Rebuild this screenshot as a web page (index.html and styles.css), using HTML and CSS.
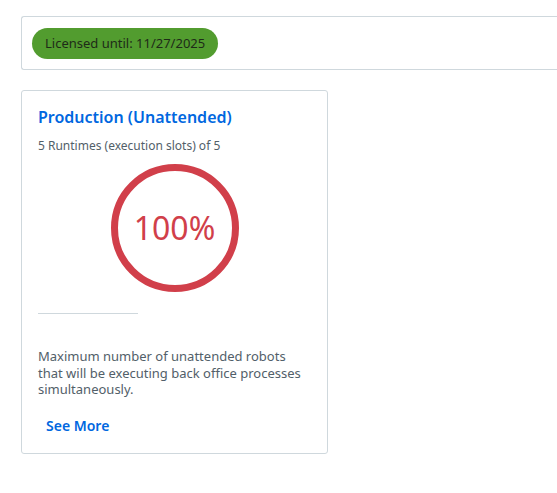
FILE: index.html
```html
<!DOCTYPE html>
<html lang="en">
  <head>
    <meta charset="UTF-8" />
    <meta name="viewport" content="width=device-width, initial-scale=1.0" />
    <title>Licenses</title>
    <link rel="stylesheet" href="styles.css">
  </head>
  <body>
    <div class="page">
      <div class="license-bar">
        <span class="pill">Licensed until: 11/27/2025</span>
      </div>

      <div class="card">
        <h2 class="card-title">Production (Unattended)</h2>
        <p class="card-sub">5 Runtimes (execution slots) of 5</p>

        <div class="gauge">
          <svg width="130" height="130" viewBox="0 0 130 130">
            <circle cx="65" cy="65" r="60.5" fill="none" stroke="#d13f4a" stroke-width="7" />
          </svg>
          <span class="gauge-value">100%</span>
        </div>

        <hr class="divider" />

        <p class="card-desc">
          Maximum number of unattended robots that will be executing back office processes simultaneously.
        </p>

        <a class="see-more" href="#">See More</a>
      </div>
    </div>
  </body>
</html>
```

FILE: styles.css
```css
body {
  margin: 0;
  font-family: "Noto Sans", "Open Sans", sans-serif;
  background: #fff;
  color: #273139;
}
.page {
  padding: 16px 0 0 21px;
}

/* 상단 라이선스 바 (오른쪽은 화면 밖으로 이어짐) */
.license-bar {
  display: flex;
  align-items: center;
  height: 52px;
  padding-left: 10px;
  border: 1px solid #cfd8dd;
  border-right: 0;
  border-radius: 3px 0 0 3px;
}
.pill {
  display: inline-flex;
  align-items: center;
  height: 31px;
  padding: 0 13px;
  border-radius: 16px;
  background: #529c2f;
  color: #1e2b18;
  font-size: 13px;
}

/* 카드 */
.card {
  box-sizing: border-box;
  width: 307px;
  height: 364px;
  margin-top: 20px;
  padding: 15px 16px 0 16px;
  border: 1px solid #cfd8dd;
  border-radius: 3px;
}
.card-title {
  margin: 0;
  font-size: 16px;
  font-weight: 600;
  line-height: 22px;
  color: #0067df;
}
.card-sub {
  margin: 9px 0 0;
  font-size: 12px;
  line-height: 17px;
  color: #526069;
}
.gauge {
  position: relative;
  width: 130px;
  height: 130px;
  margin: 9px auto 0;
}
.gauge svg {
  display: block;
}
.gauge-value {
  position: absolute;
  inset: 0;
  display: flex;
  align-items: center;
  justify-content: center;
  padding-bottom: 1px;
  font-size: 32px;
  color: #d13f4a;
}
.divider {
  width: 100px;
  margin: 20px 0 0;
  border: 0;
  border-top: 1px solid #cfd8dd;
}
.card-desc {
  margin: 34px 0 0;
  font-size: 13px;
  line-height: 16.5px;
  color: #526069;
}
.see-more {
  display: inline-block;
  margin: 18px 0 0 8px;
  font-size: 14px;
  font-weight: 600;
  color: #0067df;
  text-decoration: none;
}
```
